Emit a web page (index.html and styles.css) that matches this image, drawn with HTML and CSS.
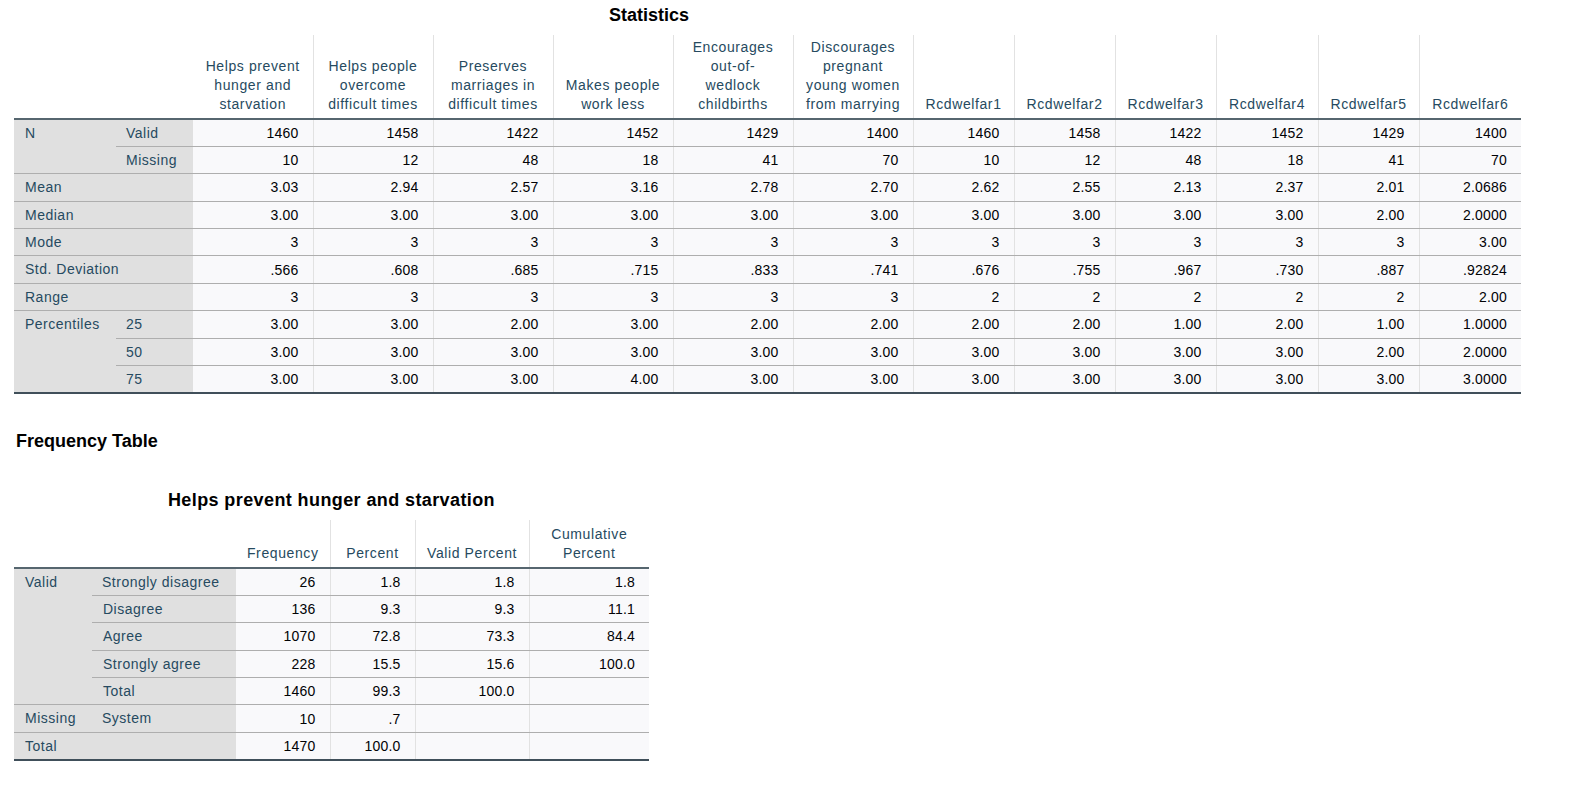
FILE: index.html
```html
<!DOCTYPE html>
<html>
<head>
<meta charset="utf-8">
<link rel="stylesheet" href="styles.css">
</head>
<body>
<div class="page">
  <div class="stats-title">Statistics</div>
  <table class="pivot stats">
    <colgroup>
      <col class="w102"><col class="w77">
      <col class="w120"><col class="w120"><col class="w120"><col class="w120"><col class="w120"><col class="w120">
      <col class="w101"><col class="w101"><col class="w101"><col class="w102"><col class="w101"><col class="w102">
    </colgroup>
    <thead>
      <tr class="hdr4">
        <th class="corner" colspan="2"></th>
        <th>Helps prevent<br>hunger and<br>starvation</th>
        <th>Helps people<br>overcome<br>difficult times</th>
        <th>Preserves<br>marriages in<br>difficult times</th>
        <th>Makes people<br>work less</th>
        <th>Encourages<br>out-of-<br>wedlock<br>childbirths</th>
        <th>Discourages<br>pregnant<br>young women<br>from marrying</th>
        <th>Rcdwelfar1</th>
        <th>Rcdwelfar2</th>
        <th>Rcdwelfar3</th>
        <th>Rcdwelfar4</th>
        <th>Rcdwelfar5</th>
        <th>Rcdwelfar6</th>
      </tr>
    </thead>
    <tbody>
      <tr>
        <td class="lab" rowspan="2">N</td>
        <td class="lab">Valid</td>
        <td>1460</td><td>1458</td><td>1422</td><td>1452</td><td>1429</td><td>1400</td>
        <td>1460</td><td>1458</td><td>1422</td><td>1452</td><td>1429</td><td>1400</td>
      </tr>
      <tr>
        <td class="lab">Missing</td>
        <td>10</td><td>12</td><td>48</td><td>18</td><td>41</td><td>70</td>
        <td>10</td><td>12</td><td>48</td><td>18</td><td>41</td><td>70</td>
      </tr>
      <tr>
        <td class="lab" colspan="2">Mean</td>
        <td>3.03</td><td>2.94</td><td>2.57</td><td>3.16</td><td>2.78</td><td>2.70</td>
        <td>2.62</td><td>2.55</td><td>2.13</td><td>2.37</td><td>2.01</td><td>2.0686</td>
      </tr>
      <tr>
        <td class="lab" colspan="2">Median</td>
        <td>3.00</td><td>3.00</td><td>3.00</td><td>3.00</td><td>3.00</td><td>3.00</td>
        <td>3.00</td><td>3.00</td><td>3.00</td><td>3.00</td><td>2.00</td><td>2.0000</td>
      </tr>
      <tr>
        <td class="lab" colspan="2">Mode</td>
        <td>3</td><td>3</td><td>3</td><td>3</td><td>3</td><td>3</td>
        <td>3</td><td>3</td><td>3</td><td>3</td><td>3</td><td>3.00</td>
      </tr>
      <tr>
        <td class="lab" colspan="2">Std. Deviation</td>
        <td>.566</td><td>.608</td><td>.685</td><td>.715</td><td>.833</td><td>.741</td>
        <td>.676</td><td>.755</td><td>.967</td><td>.730</td><td>.887</td><td>.92824</td>
      </tr>
      <tr>
        <td class="lab" colspan="2">Range</td>
        <td>3</td><td>3</td><td>3</td><td>3</td><td>3</td><td>3</td>
        <td>2</td><td>2</td><td>2</td><td>2</td><td>2</td><td>2.00</td>
      </tr>
      <tr>
        <td class="lab end" rowspan="3">Percentiles</td>
        <td class="lab">25</td>
        <td>3.00</td><td>3.00</td><td>2.00</td><td>3.00</td><td>2.00</td><td>2.00</td>
        <td>2.00</td><td>2.00</td><td>1.00</td><td>2.00</td><td>1.00</td><td>1.0000</td>
      </tr>
      <tr>
        <td class="lab">50</td>
        <td>3.00</td><td>3.00</td><td>3.00</td><td>3.00</td><td>3.00</td><td>3.00</td>
        <td>3.00</td><td>3.00</td><td>3.00</td><td>3.00</td><td>2.00</td><td>2.0000</td>
      </tr>
      <tr class="last">
        <td class="lab">75</td>
        <td>3.00</td><td>3.00</td><td>3.00</td><td>4.00</td><td>3.00</td><td>3.00</td>
        <td>3.00</td><td>3.00</td><td>3.00</td><td>3.00</td><td>3.00</td><td>3.0000</td>
      </tr>
    </tbody>
  </table>

  <div class="section-title">Frequency Table</div>

  <div class="freq-wrap">
    <div class="freq-title">Helps prevent hunger and starvation</div>
    <table class="pivot freq">
      <colgroup>
        <col class="w78"><col class="w144"><col class="w94"><col class="w85"><col class="w114"><col class="w120">
      </colgroup>
      <thead>
        <tr class="hdr2">
          <th class="corner" colspan="2"></th>
          <th>Frequency</th>
          <th>Percent</th>
          <th>Valid Percent</th>
          <th>Cumulative<br>Percent</th>
        </tr>
      </thead>
      <tbody>
        <tr>
          <td class="lab" rowspan="5">Valid</td>
          <td class="lab">Strongly disagree</td>
          <td>26</td><td>1.8</td><td>1.8</td><td>1.8</td>
        </tr>
        <tr>
          <td class="lab">Disagree</td>
          <td>136</td><td>9.3</td><td>9.3</td><td>11.1</td>
        </tr>
        <tr>
          <td class="lab">Agree</td>
          <td>1070</td><td>72.8</td><td>73.3</td><td>84.4</td>
        </tr>
        <tr>
          <td class="lab">Strongly agree</td>
          <td>228</td><td>15.5</td><td>15.6</td><td>100.0</td>
        </tr>
        <tr>
          <td class="lab">Total</td>
          <td>1460</td><td>99.3</td><td>100.0</td><td></td>
        </tr>
        <tr>
          <td class="lab">Missing</td>
          <td class="lab">System</td>
          <td>10</td><td>.7</td><td></td><td></td>
        </tr>
        <tr class="last">
          <td class="lab" colspan="2">Total</td>
          <td>1470</td><td>100.0</td><td></td><td></td>
        </tr>
      </tbody>
    </table>
  </div>
</div>
</body>
</html>
```

FILE: styles.css
```css
html, body {
  margin: 0;
  padding: 0;
  background: #ffffff;
}

body {
  font-family: "Liberation Sans", Arial, sans-serif;
  font-size: 14px;
  color: #010205;
}

.page {
  padding: 4px 0 0 14px;
}

.stats-title {
  font-size: 18px;
  font-weight: bold;
  line-height: 22px;
  color: #000;
  padding-left: 595px;
  margin-bottom: 9px;
}

.section-title {
  font-size: 18px;
  font-weight: bold;
  line-height: 22px;
  color: #000;
  margin: 36px 0 0 2px;
}

.freq-wrap {
  width: 635px;
  margin-top: 37px;
}

.freq-title {
  font-size: 18px;
  font-weight: bold;
  line-height: 22px;
  letter-spacing: 0.4px;
  color: #000;
  text-align: center;
  margin-bottom: 9px;
}

.pivot {
  border-collapse: collapse;
  table-layout: fixed;
}

.stats { width: 1507px; }
.freq { width: 635px; }

.w77 { width: 77px; }
.w78 { width: 78px; }
.w85 { width: 85px; }
.w94 { width: 94px; }
.w101 { width: 101px; }
.w102 { width: 102px; }
.w114 { width: 114px; }
.w120 { width: 120px; }
.w144 { width: 144px; }

.pivot th,
.pivot td {
  box-sizing: border-box;
}

.pivot th {
  font-weight: normal;
  color: #264a60;
  letter-spacing: 0.6px;
  line-height: 19px;
  text-align: center;
  vertical-align: bottom;
  padding: 0 3px 4px;
  border-left: 1px solid #e2e2e2;
  border-bottom: 2px solid #56666f;
  white-space: nowrap;
}

.pivot th.corner,
.pivot th.corner + th {
  border-left: none;
}

.hdr4 th { height: 84px; }
.hdr2 th { height: 48px; }

.pivot td {
  height: 27.4px;
  padding: 0 14px 0 0;
  text-align: right;
  vertical-align: middle;
  background: #f9f9fb;
  border-bottom: 1px solid #aeaeae;
  border-left: 1px solid #e2e2e2;
  white-space: nowrap;
  line-height: 16px;
  letter-spacing: 0.2px;
}

.pivot td.lab {
  background: #e0e0e0;
  color: #264a60;
  text-align: left;
  vertical-align: top;
  padding: 5px 0 0 10px;
  letter-spacing: 0.5px;
  border-left: none;
}

.pivot td.lab + td:not(.lab) {
  border-left: none;
}

.stats td.lab[rowspan],
.stats td.lab[colspan] {
  padding-left: 11px;
}

.freq tr td.lab:first-child {
  padding-left: 11px;
}

.freq tr td.lab:first-child + td.lab {
  padding-left: 10px;
}

.pivot tr.last td,
.pivot td.end {
  border-bottom: 2px solid #404f5a;
}
```
